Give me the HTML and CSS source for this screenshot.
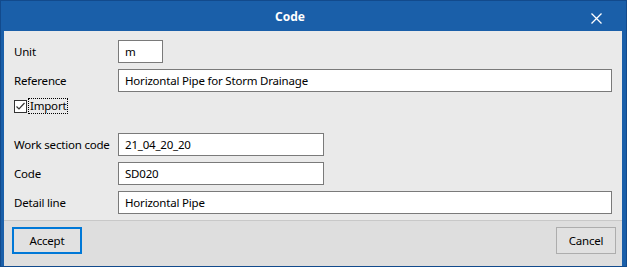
FILE: index.html
```html
<!DOCTYPE html>
<html>
<head>
<meta charset="utf-8">
<link rel="stylesheet" href="styles.css">
</head>
<body>
<div class="window">
  <div class="titlebar">
    <span class="title">Code</span>
    <svg class="close" width="11" height="11" viewBox="0 0 11 11"><path d="M0.5 0.5 L10.5 10.5 M10.5 0.5 L0.5 10.5" stroke="#fff" stroke-width="1.3" fill="none"/></svg>
  </div>
  <div class="content">
    <div class="form">
      <div class="row"><label class="lbl">Unit</label><div class="input short">m</div></div>
      <div class="row"><label class="lbl">Reference</label><div class="input wide">Horizontal Pipe for Storm Drainage</div></div>
      <div class="check-row">
        <span class="checkbox"><svg width="11" height="11" viewBox="0 0 11 11"><path d="M1.5 5.5 L4 8 L9.5 2" stroke="#333" stroke-width="1.2" fill="none"/></svg></span>
        <span class="check-label">Import</span>
      </div>
      <div class="row gap-top"><label class="lbl">Work section code</label><div class="input mid">21_04_20_20</div></div>
      <div class="row"><label class="lbl">Code</label><div class="input mid">SD020</div></div>
      <div class="row"><label class="lbl">Detail line</label><div class="input wide">Horizontal Pipe</div></div>
    </div>
    <div class="footer">
      <button class="btn primary">Accept</button>
      <button class="btn">Cancel</button>
    </div>
  </div>
</div>
</body>
</html>
```
FILE: styles.css
```css
html, body {
  margin: 0;
  padding: 0;
  width: 627px;
  height: 267px;
  overflow: hidden;
}
body {
  font-family: "Noto Sans", "DejaVu Sans", sans-serif;
  font-size: 11.5px;
  letter-spacing: -0.2px;
  color: #000;
}
.window {
  box-sizing: border-box;
  width: 627px;
  height: 267px;
  background: #1a5fa9;
  border: 1px solid #124a8c;
  display: flex;
  flex-direction: column;
  padding: 0 4px 4px 3px;
}
.titlebar {
  height: 30px;
  flex: none;
  position: relative;
  display: flex;
  align-items: center;
  justify-content: center;
  color: #fff;
  padding-right: 46px;
}
.title {
  font-size: 12px;
  font-weight: bold;
  letter-spacing: 0;
  margin-top: 1px;
}
.close {
  position: absolute;
  right: 20px;
  top: 12px;
}
.content {
  flex: 1;
  display: flex;
  flex-direction: column;
  background: #eaeaea;
}
.form {
  padding: 9px 10px 0 10px;
  flex: 1;
  display: flex;
  flex-direction: column;
}
.row {
  display: flex;
  align-items: center;
  height: 23px;
  margin-bottom: 6px;
}
.row.gap-top {
  margin-top: 19px;
}
.lbl {
  width: 104px;
  flex: none;
  white-space: nowrap;
}
.input {
  box-sizing: border-box;
  height: 23px;
  background: #fff;
  border: 1px solid #7a7a7a;
  padding: 0 6px;
  display: flex;
  align-items: center;
  white-space: nowrap;
}
.input.short { width: 45px; }
.input.mid { width: 206px; }
.input.wide { flex: 1; }
.check-row {
  display: flex;
  align-items: center;
  height: 16px;
  margin-top: 0;
}
.checkbox {
  box-sizing: border-box;
  width: 13px;
  height: 13px;
  border: 1px solid #333;
  background: #fff;
  display: flex;
  align-items: center;
  justify-content: center;
  margin-right: 2px;
}
.checkbox svg { display: block; }
.check-label {
  outline: 1px dotted #000;
  padding: 0 1px;
  line-height: 14px;
}
.footer {
  flex: none;
  height: 39px;
  border-top: 1px solid #c8c8c8;
  background: #dedede;
  display: flex;
  justify-content: space-between;
  align-items: flex-start;
  padding: 6px 6px 0 8px;
}
.btn {
  box-sizing: border-box;
  height: 27px;
  width: 60px;
  font-family: inherit;
  font-size: 11.5px;
  letter-spacing: -0.2px;
  color: #000;
  background: #e1e1e1;
  border: 1px solid #adadad;
  padding: 0;
  margin: 0;
}
.btn.primary {
  width: 70px;
  border: 2px solid #0078d7;
}
```
